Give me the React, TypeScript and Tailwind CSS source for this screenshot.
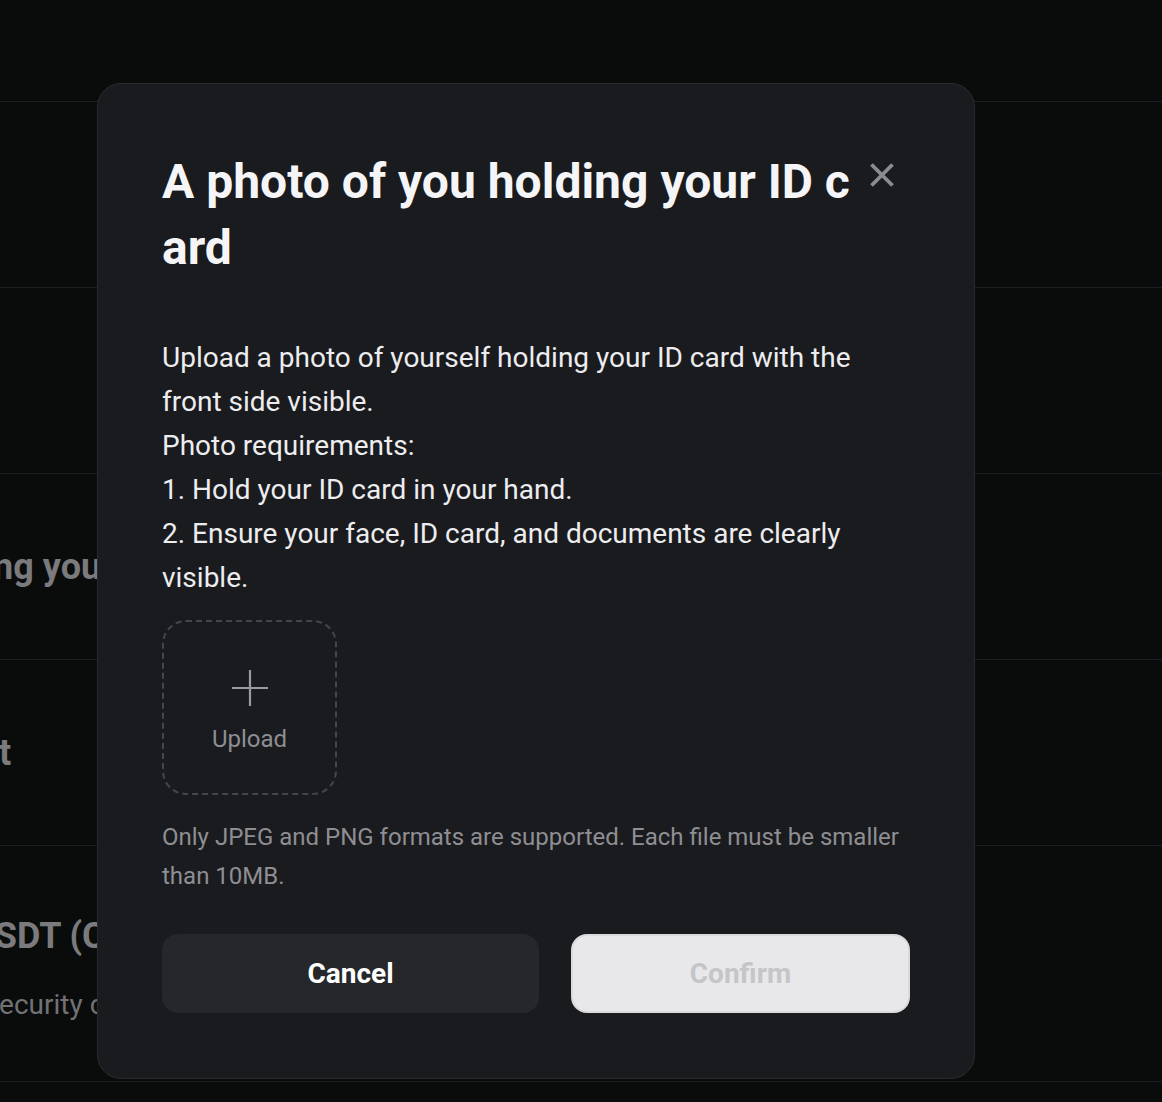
const rows = [
  { title: 'Basic info', h: 'h-[186px]', ml: '-ml-[321px]' },
  { title: 'ID card front', h: 'h-[186px]', ml: '-ml-[321px]' },
  { title: 'A photo of you holding your ID card', h: 'h-[186px]', ml: '-ml-[331px]' },
  { title: 'Driving licence, front', h: 'h-[186px]', ml: '-ml-[324px]' },
  {
    title: 'Proof of funds in USDT (Crypto)',
    sub: 'Required for your account security check',
    h: 'h-[236px] pt-[12px]',
    ml: '-ml-[309px]',
  },
];

function BackgroundList() {
  return (
    <div className="pt-[101px]">
      {rows.map((row) => (
        <div
          key={row.title}
          className={`flex flex-col justify-center border-t border-[#1d1e1f] ${row.h}`}
        >
          <div className={`whitespace-nowrap ${row.ml}`}>
            <div className="text-[36px] font-bold leading-[44px] text-[#7b7b7d]">{row.title}</div>
            {row.sub && (
              <div className="-ml-[34px] mt-[27px] text-[28px] leading-[40px] text-[#727274]">
                {row.sub}
              </div>
            )}
          </div>
        </div>
      ))}
      <div className="h-[40px] border-t border-[#1d1e1f]" />
    </div>
  );
}

function UploadModal() {
  return (
    <div className="w-[878px] rounded-[24px] border border-[#2a2b2f] bg-[#1a1b1e] px-16 pb-[65px] pt-16">
      <div className="flex items-start gap-2">
        <h2 className="mt-[1px] w-[700px] break-all text-[48px] font-bold leading-[66px] text-[#f5f5f7]">
          A photo of you holding your ID card
        </h2>
        <button className="mt-[15px] text-[#8b8b90]">
          <svg width="24" height="24" viewBox="0 0 24 24" fill="none" stroke="currentColor" strokeWidth="3.8">
            <path d="M1.5 1.5L22.5 22.5M22.5 1.5L1.5 22.5" />
          </svg>
        </button>
      </div>

      <div className="mt-[55px] w-[724px] text-[28px] leading-[44px] text-[#ededf0]">
        <p>Upload a photo of yourself holding your ID card with the front side visible.</p>
        <p>Photo requirements:</p>
        <p>1. Hold your ID card in your hand.</p>
        <p>2. Ensure your face, ID card, and documents are clearly visible.</p>
      </div>

      <button className="mt-[20px] flex h-[175px] w-[175px] flex-col items-center rounded-[24px] border-2 border-dashed border-[#45464b] pt-[48px] text-[#8e8e93]">
        <svg width="36" height="36" viewBox="0 0 36 36" fill="none" stroke="#9a9a9f" strokeWidth="2.2">
          <path d="M18 0V36M0 18H36" />
        </svg>
        <span className="mt-[19px] text-[24px] leading-[28px]">Upload</span>
      </button>

      <p className="mt-[23px] text-[24px] leading-[39px] text-[#8e8e93]">
        Only JPEG and PNG formats are supported. Each file must be smaller than 10MB.
      </p>

      <div className="mt-[38px] flex gap-8">
        <button className="h-[79px] w-[377px] rounded-[16px] bg-[#26272b] text-[28px] font-bold text-white">
          Cancel
        </button>
        <button className="h-[79px] w-[339px] rounded-[16px] border-2 border-[#dadadd] bg-[#e8e8ea] text-[28px] font-bold text-[#c5c5c8]">
          Confirm
        </button>
      </div>
    </div>
  );
}

export default function App() {
  return (
    <div className="relative h-[1102px] w-full overflow-hidden bg-[#0a0b0b] font-['Roboto',sans-serif]">
      <BackgroundList />
      <div className="absolute inset-0 pl-[97px] pt-[83px]">
        <UploadModal />
      </div>
    </div>
  );
}
